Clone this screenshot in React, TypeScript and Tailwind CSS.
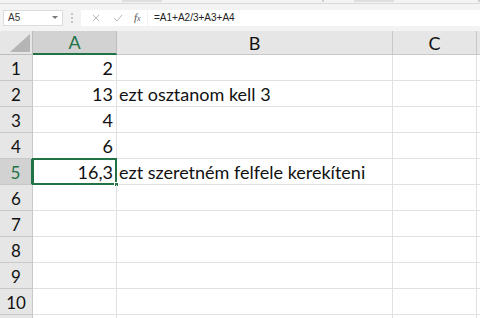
import React from "react";

const rows: { a: string; b: string }[] = [
  { a: "2", b: "" },
  { a: "13", b: "ezt osztanom kell 3" },
  { a: "4", b: "" },
  { a: "6", b: "" },
  { a: "16,3", b: "ezt szeretném felfele kerekíteni" },
  { a: "", b: "" },
  { a: "", b: "" },
  { a: "", b: "" },
  { a: "", b: "" },
  { a: "", b: "" },
  { a: "", b: "" },
];

export default function App() {
  return (
    <div
      className="w-[480px] h-[318px] overflow-hidden bg-white flex flex-col"
      style={{ fontFamily: "Lato, 'Open Sans', sans-serif" }}
    >
      {/* ribbon bottom strip */}
      <div className="h-[4px] shrink-0 bg-[#f3f3f3] border-b border-[#dadada] flex items-start">
        <div className="ml-[122px] w-[40px] h-[2px] bg-[#dedede]" />
        <div className="ml-[160px] w-[2px] h-[2px] bg-[#cfcfcf]" />
        <div className="ml-[30px] w-[40px] h-[2px] bg-[#dedede]" />
        <div className="ml-[84px] w-[2px] h-[2px] bg-[#cfcfcf]" />
      </div>
      {/* formula bar */}
      <div className="h-[27px] shrink-0 bg-[#f3f3f3] flex items-center pl-[3px]">
        <div className="w-[60px] h-[16px] bg-white border border-[#dcdcdc] flex items-center justify-between pl-[4px] pr-[4px]">
          <span className="text-[10px] text-[#333] leading-none" style={{ fontFamily: "'Liberation Sans', sans-serif" }}>A5</span>
          <svg width="6" height="4" viewBox="0 0 6 4"><path d="M0 0 L6 0 L3 3 Z" fill="#777" /></svg>
        </div>
        <div className="w-[18px] flex flex-col items-center gap-[2px]">
          <div className="w-[2px] h-[2px] bg-[#c6c6c6]" />
          <div className="w-[2px] h-[2px] bg-[#c6c6c6]" />
          <div className="w-[2px] h-[2px] bg-[#c6c6c6]" />
        </div>
        <div className="w-[66px] h-[16px] bg-white flex items-center">
          <svg className="ml-[11px]" width="8" height="8" viewBox="0 0 8 8"><path d="M1 1 L7 7 M7 1 L1 7" stroke="#b9b9b9" strokeWidth="1" /></svg>
          <svg className="ml-[13px]" width="10" height="8" viewBox="0 0 10 8"><path d="M1 4 L4 7 L9 1" stroke="#b9b9b9" strokeWidth="1" fill="none" /></svg>
          <span className="ml-[11px] text-[11px] italic text-[#555] leading-none" style={{ fontFamily: "'Liberation Serif', serif" }}>
            f<span className="text-[8px]">x</span>
          </span>
        </div>
        <div className="flex-1 h-[16px] bg-white ml-[1px] flex items-center pl-[6px]">
          <span className="text-[10px] text-[#222] leading-none" style={{ fontFamily: "'Liberation Sans', sans-serif" }}>=A1+A2/3+A3+A4</span>
        </div>
      </div>
      {/* grid */}
      <div
        className="grid flex-1 text-[18px] text-[#111]"
        style={{ gridTemplateColumns: "33px 84px 276px 84px 1fr", gridAutoRows: "26px", gridTemplateRows: "24px" }}
      >
        {/* header row */}
        <div className="bg-[#e6e6e6] border-r border-b border-[#bdbdbd] relative">
          <svg className="absolute right-[2px] bottom-[2px]" width="20" height="18" viewBox="0 0 20 18">
            <path d="M20 0 L20 18 L0 18 Z" fill="#b5b5b5" />
          </svg>
        </div>
        <div className="bg-[#d2d2d2] border-r border-[#bdbdbd] border-b-2 border-b-[#217346] flex items-center justify-center text-[#217346] leading-none">
          A
        </div>
        <div className="bg-[#e6e6e6] border-r border-b border-[#c8c8c8] flex items-center justify-center leading-none">B</div>
        <div className="bg-[#e6e6e6] border-r border-b border-[#c8c8c8] flex items-center justify-center leading-none">C</div>
        <div className="bg-[#e6e6e6] border-b border-[#c8c8c8]" />
        {rows.map((r, i) => {
          const sel = i === 4;
          return (
            <React.Fragment key={i}>
              <div
                className={
                  sel
                    ? "bg-[#d2d2d2] border-b border-[#c8c8c8] border-r-2 border-r-[#217346] flex items-end justify-center pb-[1px] text-[#217346] leading-none"
                    : "bg-[#e6e6e6] border-b border-r border-[#c8c8c8] flex items-end justify-center pb-[1px] leading-none"
                }
                style={{ fontSize: 17 }}
              >
                {i < 10 && <span className="mb-[2px]">{i + 1}</span>}
              </div>
              <div className="border-r border-b border-[#e1e1e1] flex items-end justify-end pr-[3px] pb-[3px] leading-none relative">
                {r.a}
                {sel && (
                  <>
                    <div className="absolute -left-[1px] -top-[1px] -right-[1px] -bottom-[1px] border-2 border-[#217346]" />
                    <div className="absolute -right-[3px] -bottom-[3px] w-[5px] h-[5px] bg-[#217346] border border-white" />
                  </>
                )}
              </div>
              <div className="border-r border-b border-[#e1e1e1] flex items-end pl-[2px] pb-[3px] leading-none whitespace-nowrap">
                {r.b}
              </div>
              <div className="border-r border-b border-[#e1e1e1]" />
              <div className="border-b border-[#e1e1e1]" />
            </React.Fragment>
          );
        })}
      </div>
    </div>
  );
}
